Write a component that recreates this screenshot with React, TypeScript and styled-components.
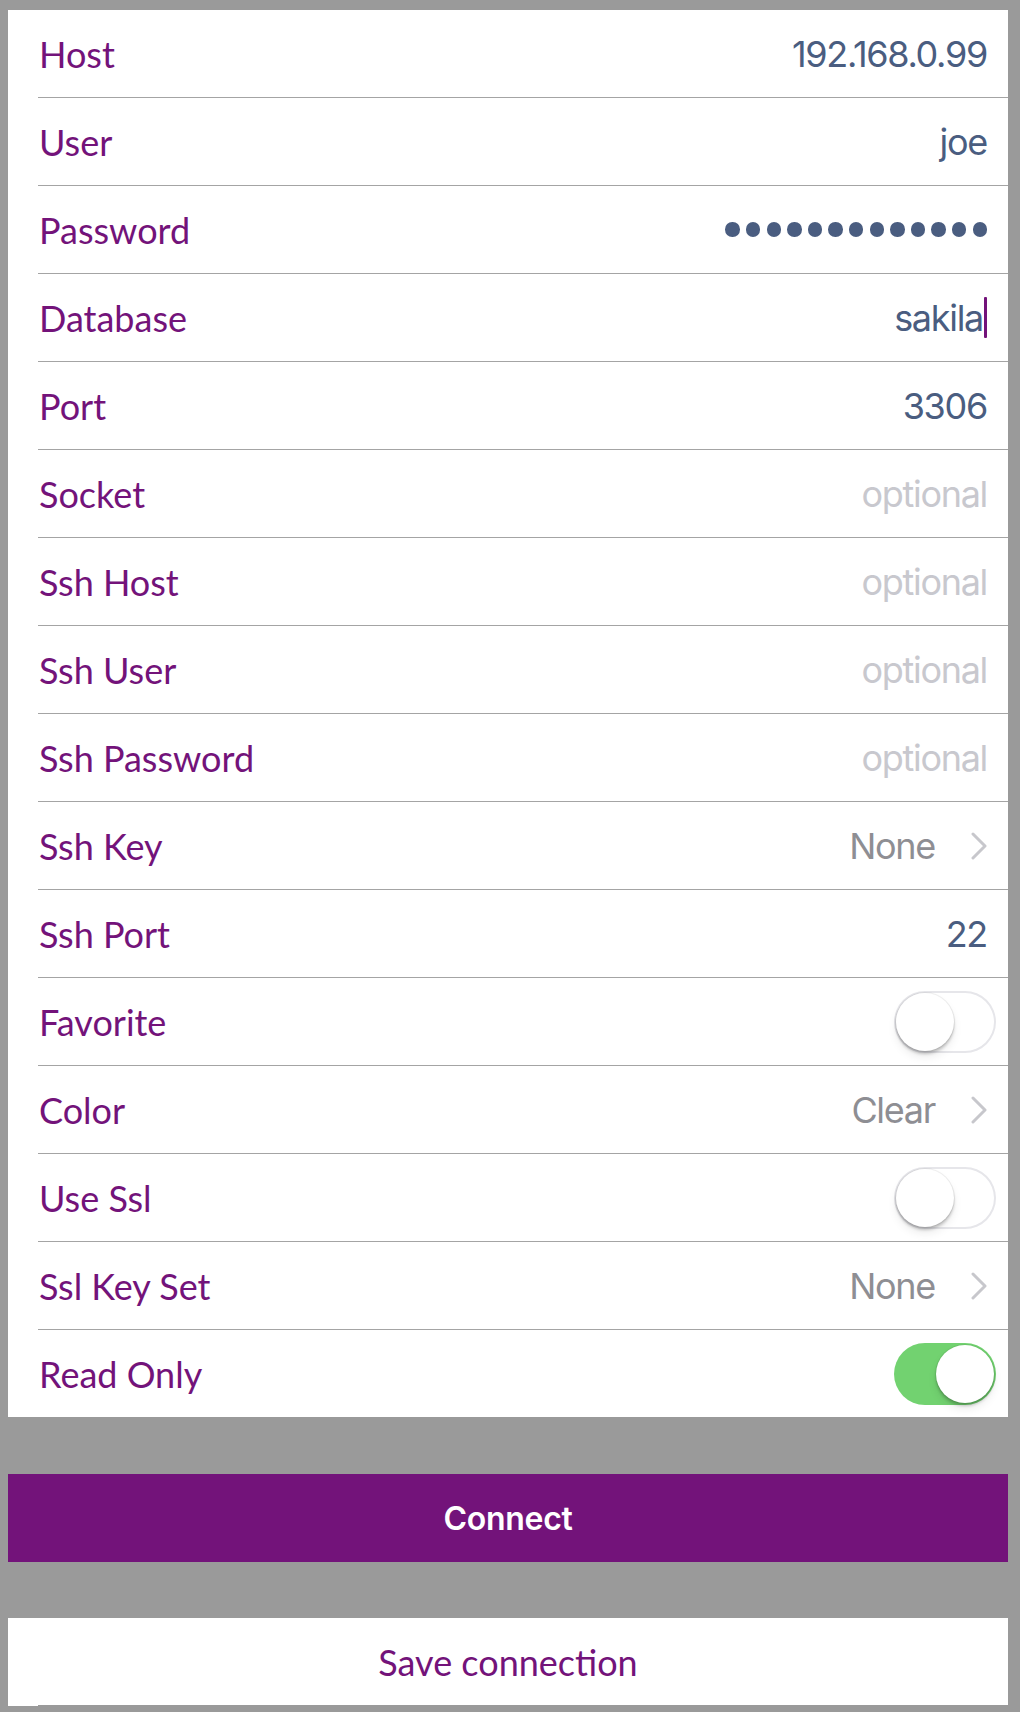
import React from "react";
import styled, { createGlobalStyle } from "styled-components";

const Global = createGlobalStyle`
  html, body {
    margin: 0;
    padding: 0;
    background: #9a9a9a;
  }
  * { box-sizing: border-box; }
`;

const PURPLE = "#73137a";

const Page = styled.div`
  width: 1020px;
  min-height: 1712px;
  padding: 10px 12px 0 8px;
  background: #9a9a9a;
  display: flex;
  flex-direction: column;
`;

const Panel = styled.div`
  background: #ffffff;
  padding-left: 30px;
`;

const Row = styled.div<{ $last?: boolean }>`
  display: flex;
  align-items: center;
  justify-content: space-between;
  height: ${(p) => (p.$last ? "87px" : "88px")};
  border-bottom: ${(p) => (p.$last ? "none" : "1px solid #a4a4a4")};
  padding-right: 21px;
`;

const Label = styled.span`
  font-family: Lato, "Noto Sans", sans-serif;
  font-weight: 400;
  font-size: 36px;
  color: ${PURPLE};
  padding-left: 1px;
`;

const Value = styled.span<{ $tone?: "value" | "placeholder" | "muted" }>`
  font-family: Inter, Roboto, sans-serif;
  font-size: 36px;
  letter-spacing: -1.3px;
  color: ${(p) =>
    p.$tone === "placeholder" ? "#c8c8ce" : p.$tone === "muted" ? "#8e8e93" : "#4a5d80"};
  display: flex;
  align-items: center;
`;

const Cursor = styled.span`
  display: inline-block;
  width: 3px;
  height: 41px;
  background: ${PURPLE};
  border-radius: 1px;
  margin-left: 1px;
`;

const Dots = styled.div`
  display: flex;
  gap: 6.1px;
`;

const Dot = styled.span`
  width: 14.5px;
  height: 14.5px;
  border-radius: 50%;
  background: #4a5d80;
`;

const Disclosure = styled.div`
  display: flex;
  align-items: center;
  gap: 36px;
`;

const Toggle = styled.div<{ $on?: boolean }>`
  position: relative;
  width: 102px;
  height: 62px;
  margin-right: -9px;
  border-radius: 31px;
  background: ${(p) => (p.$on ? "#72d270" : "#ffffff")};
  box-shadow: ${(p) => (p.$on ? "none" : "inset 0 0 0 2px #e6e6ea")};
`;

const Knob = styled.div<{ $on?: boolean }>`
  position: absolute;
  top: 2px;
  left: ${(p) => (p.$on ? "42px" : "2px")};
  width: 58px;
  height: 58px;
  border-radius: 50%;
  background: #ffffff;
  box-shadow: 0 3px 3px rgba(0, 0, 0, 0.2), 0 0 0 1px rgba(0, 0, 0, 0.06), 0 6px 10px rgba(0, 0, 0, 0.08);
`;

const ConnectButton = styled.div`
  margin-top: 57px;
  height: 88px;
  background: ${PURPLE};
  color: #ffffff;
  display: flex;
  align-items: center;
  justify-content: center;
  font-family: Inter, Roboto, sans-serif;
  font-weight: 600;
  font-size: 32px;
  letter-spacing: -0.3px;
`;

const SaveButton = styled.div`
  position: relative;
  margin-top: 56px;
  height: 88px;
  background: #ffffff;
  color: ${PURPLE};
  display: flex;
  align-items: center;
  justify-content: center;
  font-family: Lato, "Noto Sans", sans-serif;
  font-weight: 400;
  font-size: 36px;

  &::after {
    content: "";
    position: absolute;
    left: 30px;
    right: 0;
    bottom: 0;
    height: 1px;
    background: #9a9a9a;
  }
`;

const Chevron = () => (
  <svg width="16" height="28" viewBox="0 0 16 28">
    <polyline points="2,2 14,14 2,26" fill="none" stroke="#c7c7cc" strokeWidth="3" strokeLinecap="round" strokeLinejoin="round" />
  </svg>
);

type RowDef =
  | { label: string; kind: "text"; value: string; tone?: "value" | "placeholder"; cursor?: boolean }
  | { label: string; kind: "password"; count: number }
  | { label: string; kind: "disclosure"; value: string }
  | { label: string; kind: "toggle"; on: boolean };

const rows: RowDef[] = [
  { label: "Host", kind: "text", value: "192.168.0.99" },
  { label: "User", kind: "text", value: "joe" },
  { label: "Password", kind: "password", count: 13 },
  { label: "Database", kind: "text", value: "sakila", cursor: true },
  { label: "Port", kind: "text", value: "3306" },
  { label: "Socket", kind: "text", value: "optional", tone: "placeholder" },
  { label: "Ssh Host", kind: "text", value: "optional", tone: "placeholder" },
  { label: "Ssh User", kind: "text", value: "optional", tone: "placeholder" },
  { label: "Ssh Password", kind: "text", value: "optional", tone: "placeholder" },
  { label: "Ssh Key", kind: "disclosure", value: "None" },
  { label: "Ssh Port", kind: "text", value: "22" },
  { label: "Favorite", kind: "toggle", on: false },
  { label: "Color", kind: "disclosure", value: "Clear" },
  { label: "Use Ssl", kind: "toggle", on: false },
  { label: "Ssl Key Set", kind: "disclosure", value: "None" },
  { label: "Read Only", kind: "toggle", on: true },
];

function renderControl(r: RowDef) {
  switch (r.kind) {
    case "text":
      return (
        <Value $tone={r.tone}>
          {r.value}
          {r.cursor && <Cursor />}
        </Value>
      );
    case "password":
      return (
        <Dots>
          {Array.from({ length: r.count }).map((_, i) => (
            <Dot key={i} />
          ))}
        </Dots>
      );
    case "disclosure":
      return (
        <Disclosure>
          <Value $tone="muted">{r.value}</Value>
          <Chevron />
        </Disclosure>
      );
    case "toggle":
      return (
        <Toggle $on={r.on}>
          <Knob $on={r.on} />
        </Toggle>
      );
  }
}

export default function App() {
  return (
    <>
      <Global />
      <Page>
        <Panel>
          {rows.map((r, i) => (
            <Row key={r.label} $last={i === rows.length - 1}>
              <Label>{r.label}</Label>
              {renderControl(r)}
            </Row>
          ))}
        </Panel>
        <ConnectButton>Connect</ConnectButton>
        <SaveButton>Save connection</SaveButton>
      </Page>
    </>
  );
}
